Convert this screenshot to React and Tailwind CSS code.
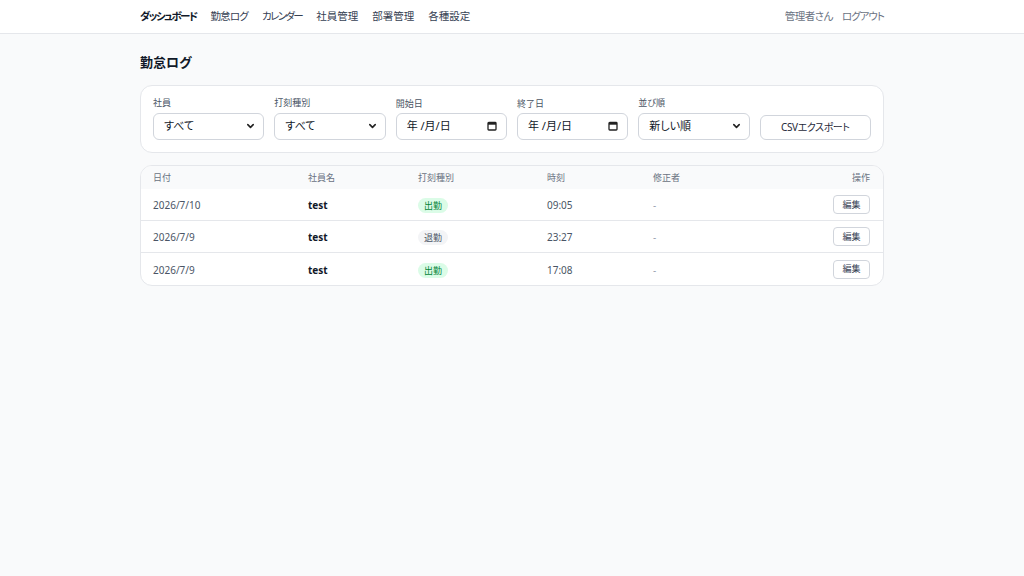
import React from 'react';

// tracking tightens the kana-heavy labels a little
const navItems = [
  { label: 'ダッシュボード', cls: 'tracking-[-1.6px]' },
  { label: '勤怠ログ', cls: 'tracking-[-0.8px]' },
  { label: 'カレンダー', cls: 'tracking-[-1.6px]' },
  { label: '社員管理', cls: '' },
  { label: '部署管理', cls: '' },
  { label: '各種設定', cls: '' },
];

const logs = [
  { date: '2026/7/10', name: 'test', type: '出勤', time: '09:05', editor: '-' },
  { date: '2026/7/9', name: 'test', type: '退勤', time: '23:27', editor: '-' },
  { date: '2026/7/9', name: 'test', type: '出勤', time: '17:08', editor: '-' },
];

function Chevron() {
  return (
    <svg className="pointer-events-none absolute right-[9px] top-1/2 -translate-y-1/2" width="9" height="9" viewBox="0 0 10 10">
      <path d="M2 3.5 L5 6.5 L8 3.5" fill="none" stroke="#222" strokeWidth="1.8" strokeLinecap="round" strokeLinejoin="round" />
    </svg>
  );
}

function SelectField({ label, value }) {
  return (
    <label className="flex flex-col gap-[3px]">
      <span className="text-[9px] leading-[12px] text-gray-600">{label}</span>
      <div className="relative">
        <select
          defaultValue={value}
          className="h-[27px] w-full appearance-none rounded-md border border-gray-300 bg-white pl-[10px] pr-6 text-[11px] text-gray-900"
        >
          <option>{value}</option>
        </select>
        <Chevron />
      </div>
    </label>
  );
}

// date picker drawn as a plain box so the placeholder stays the same in every locale
function DateField({ label }) {
  return (
    <div className="flex flex-col gap-[3px]">
      <span className="text-[9px] leading-[12px] text-gray-600">{label}</span>
      <div className="flex h-[27px] items-center justify-between rounded-md border border-gray-300 bg-white pl-[10px] pr-[9px] text-[11px] text-gray-900">
        <span>年 /月/日</span>
        <svg width="10" height="10" viewBox="0 0 10 10">
          <rect x="1" y="1.5" width="8" height="7.5" rx="0.8" fill="none" stroke="#222" strokeWidth="1.3" />
          <rect x="1" y="1.5" width="8" height="2.2" fill="#222" />
        </svg>
      </div>
    </div>
  );
}

function TypeBadge({ type }) {
  const cls = type === '出勤' ? 'bg-green-100 text-green-700' : 'bg-gray-100 text-gray-600';
  return <span className={`inline-block rounded-full px-[6px] py-[1px] text-[9px] leading-[13px] ${cls}`}>{type}</span>;
}

export default function App() {
  return (
    <div className="min-h-screen bg-gray-50 font-['Noto_Sans','Noto_Sans_CJK_JP',sans-serif] text-gray-800 [font-feature-settings:'palt']">
      {/* top navigation */}
      <nav className="h-[34px] border-b border-gray-200 bg-white">
        <div className="mx-auto flex h-full max-w-3xl items-center justify-between px-3">
          <div className="flex items-center gap-[14px] text-[10.5px]">
            {navItems.map((item, i) => (
              <span key={item.label} className={`${item.cls} ${i === 0 ? 'font-semibold text-gray-900' : 'text-gray-700'}`}>
                {item.label}
              </span>
            ))}
          </div>
          <div className="flex items-center gap-[9px] text-[10.5px] text-gray-500">
            <span className="tracking-[-0.5px]">管理者さん</span>
            <span className="tracking-[-1px]">ログアウト</span>
          </div>
        </div>
      </nav>

      <main className="mx-auto max-w-3xl px-3 pt-[18px]">
        <h1 className="text-[13px] font-bold leading-[20px] text-gray-900">勤怠ログ</h1>

        {/* filters */}
        <div className="mt-[13px] rounded-xl border border-gray-200 bg-white px-3 pt-[11px] pb-[12px]">
          <div className="grid grid-cols-6 items-end gap-[10px]">
            <SelectField label="社員" value="すべて" />
            <SelectField label="打刻種別" value="すべて" />
            <DateField label="開始日" />
            <DateField label="終了日" />
            <SelectField label="並び順" value="新しい順" />
            <button className="h-[25px] rounded-md border border-gray-300 bg-white text-[10px] tracking-[-0.4px] text-gray-800">
              CSVエクスポート
            </button>
          </div>
        </div>

        {/* log table */}
        <div className="mt-[12px] overflow-hidden rounded-xl border border-gray-200 bg-white">
          <table className="w-full table-fixed text-left">
            <thead className="bg-gray-50 text-[9px] text-gray-500">
              <tr className="h-[23px]">
                <th className="w-[167px] pl-3 font-normal">日付</th>
                <th className="w-[110px] font-normal">社員名</th>
                <th className="w-[129px] font-normal">打刻種別</th>
                <th className="w-[106px] font-normal">時刻</th>
                <th className="font-normal">修正者</th>
                <th className="w-[80px] pr-[13px] text-right font-normal">操作</th>
              </tr>
            </thead>
            <tbody className="text-[10px]">
              {logs.map((row, i) => (
                <tr key={i} className={`h-[32px] ${i > 0 ? 'border-t border-gray-200' : ''}`}>
                  <td className="pl-3 pt-[2px] text-gray-600">{row.date}</td>
                  <td className="pt-[2px] font-bold text-gray-900">{row.name}</td>
                  <td className="pt-[2px]"><TypeBadge type={row.type} /></td>
                  <td className="pt-[2px] text-gray-600">{row.time}</td>
                  <td className="pt-[2px] text-gray-400">{row.editor}</td>
                  <td className="pr-[13px] text-right">
                    <button className="h-[19px] w-[37px] rounded border border-gray-300 bg-white text-[9px] text-gray-700">
                      編集
                    </button>
                  </td>
                </tr>
              ))}
            </tbody>
          </table>
        </div>
      </main>
    </div>
  );
}
